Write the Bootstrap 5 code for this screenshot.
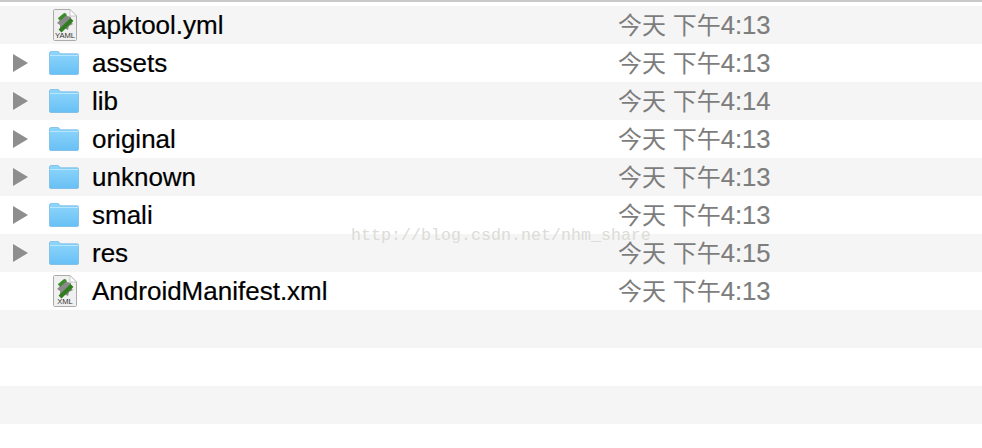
<!DOCTYPE html>
<html lang="en">
<head>
  <meta charset="UTF-8">
  <title>Finder list</title>
  <link href="https://cdn.jsdelivr.net/npm/bootstrap@5.3.0/dist/css/bootstrap.min.css" rel="stylesheet">
  <style>
    html, body {
      height: 448px;
      overflow: hidden;
      background: #fff;
    }

    .top-rule {
      height: 2px;
      background: #c9c9c9;
      margin-bottom: 4px;
    }

    .file-list {
      position: relative;
    }

    .file-row {
      height: 38px;
      font-family: "Liberation Sans", Arial, sans-serif;
      font-size: 26px;
      color: #000;
    }

    .file-row:nth-child(odd) {
      background: #f5f5f5;
    }

    .arrow-cell {
      width: 49px;
      padding-left: 13px;
    }

    .icon-cell {
      width: 43px;
    }

    .name-cell {
      width: 526px;
      padding-top: 1px;
      -webkit-text-stroke: 0.2px #000;
    }

    .date-cell {
      font-family: "Liberation Sans", "Noto Sans CJK SC", sans-serif;
      color: #7d7d7d;
      font-size: 24px;
      padding-top: 1px;
      white-space: pre;
    }

    .date-time {
      font-size: 25.6px;
      -webkit-text-stroke: 0.2px #7d7d7d;
    }

    .doc-label {
      font-family: "Liberation Sans", Arial, sans-serif;
      font-size: 7.6px;
      font-weight: 400;
      fill: #333;
    }

    .watermark {
      position: absolute;
      left: 351px;
      top: 220px;
      font-family: "Liberation Mono", monospace;
      font-size: 16.67px;
      line-height: 20px;
      color: #dcdcd8;
    }
  </style>
</head>
<body>
  <svg width="0" height="0" class="position-absolute">
    <defs>
      <linearGradient id="folderFill" x1="0" y1="0" x2="0" y2="1">
        <stop offset="0" stop-color="#8ed6fc"/>
        <stop offset="1" stop-color="#68c0f5"/>
      </linearGradient>
      <symbol id="folder" viewBox="0 0 30 24">
        <path d="M.5 4V2C.5 1.100 1.200.5 2 .5h6.500c1 0 1.500.4 2 1.200l.7 1.100H28c1 0 1.500.6 1.500 1.500V22c0 1-.6 1.500-1.500 1.500H2C1 23.500.5 23 .5 22z" fill="url(#folderFill)" stroke="#6fb5e2" stroke-width=".7"/>
        <path d="M.8 4.500h28.400" stroke="#b8e6fd" stroke-width="1"/>
      </symbol>
      <symbol id="arrow" viewBox="0 0 15 18">
        <path d="M0 0L15 9L0 18z" fill="#8e8e8e"/>
      </symbol>
      <symbol id="doc" viewBox="0 0 24 32">
        <path d="M.5 1.500C.5 1 1 .5 1.500.5H17L23.500 7V30.500c0 .5-.5 1-1 1H1.500c-.5 0-1-.5-1-1z" fill="#f0f0f0" stroke="#ababab"/>
        <path d="M17 .5V7H23.500z" fill="#fff" stroke="#b5b5b5" stroke-width=".7"/>
        <path d="M8 7L13 4L14 7L18 8L17 12L20 15L16 17L15 21L11 19L7 21L7 16L4 14L7 11z" fill="#8a8a8a"/>
        <path d="M7 22L19 10.500" stroke="#2f7d1e" stroke-width="4.200" fill="none"/>
        <path d="M6 10.500L12.500 5" stroke="#3a8c28" stroke-width="3.600" fill="none"/>
      </symbol>
    </defs>
  </svg>

  <div class="top-rule"></div>

  <div class="file-list">
    <div class="file-row d-flex align-items-center">
      <div class="arrow-cell"></div>
      <div class="icon-cell d-flex">
        <svg class="ms-1" width="24" height="32"><use href="#doc"/><text class="doc-label" x="12" y="29" text-anchor="middle">YAML</text></svg>
      </div>
      <div class="name-cell">apktool.yml</div>
      <div class="date-cell">今天 下午<span class="date-time">4:13</span></div>
    </div>
    <div class="file-row d-flex align-items-center">
      <div class="arrow-cell d-flex"><svg width="15" height="18"><use href="#arrow"/></svg></div>
      <div class="icon-cell d-flex"><svg width="30" height="24"><use href="#folder"/></svg></div>
      <div class="name-cell">assets</div>
      <div class="date-cell">今天 下午<span class="date-time">4:13</span></div>
    </div>
    <div class="file-row d-flex align-items-center">
      <div class="arrow-cell d-flex"><svg width="15" height="18"><use href="#arrow"/></svg></div>
      <div class="icon-cell d-flex"><svg width="30" height="24"><use href="#folder"/></svg></div>
      <div class="name-cell">lib</div>
      <div class="date-cell">今天 下午<span class="date-time">4:14</span></div>
    </div>
    <div class="file-row d-flex align-items-center">
      <div class="arrow-cell d-flex"><svg width="15" height="18"><use href="#arrow"/></svg></div>
      <div class="icon-cell d-flex"><svg width="30" height="24"><use href="#folder"/></svg></div>
      <div class="name-cell">original</div>
      <div class="date-cell">今天 下午<span class="date-time">4:13</span></div>
    </div>
    <div class="file-row d-flex align-items-center">
      <div class="arrow-cell d-flex"><svg width="15" height="18"><use href="#arrow"/></svg></div>
      <div class="icon-cell d-flex"><svg width="30" height="24"><use href="#folder"/></svg></div>
      <div class="name-cell">unknown</div>
      <div class="date-cell">今天 下午<span class="date-time">4:13</span></div>
    </div>
    <div class="file-row d-flex align-items-center">
      <div class="arrow-cell d-flex"><svg width="15" height="18"><use href="#arrow"/></svg></div>
      <div class="icon-cell d-flex"><svg width="30" height="24"><use href="#folder"/></svg></div>
      <div class="name-cell">smali</div>
      <div class="date-cell">今天 下午<span class="date-time">4:13</span></div>
    </div>
    <div class="file-row d-flex align-items-center">
      <div class="arrow-cell d-flex"><svg width="15" height="18"><use href="#arrow"/></svg></div>
      <div class="icon-cell d-flex"><svg width="30" height="24"><use href="#folder"/></svg></div>
      <div class="name-cell">res</div>
      <div class="date-cell">今天 下午<span class="date-time">4:15</span></div>
    </div>
    <div class="file-row d-flex align-items-center">
      <div class="arrow-cell"></div>
      <div class="icon-cell d-flex">
        <svg class="ms-1" width="24" height="32"><use href="#doc"/><text class="doc-label" x="12" y="29" text-anchor="middle">XML</text></svg>
      </div>
      <div class="name-cell">AndroidManifest.xml</div>
      <div class="date-cell">今天 下午<span class="date-time">4:13</span></div>
    </div>
    <div class="file-row"></div>
    <div class="file-row"></div>
    <div class="file-row"></div>
    <div class="watermark">http://blog.csdn.net/nhm_share</div>
  </div>
  <script src="https://cdn.jsdelivr.net/npm/bootstrap@5.3.0/dist/js/bootstrap.bundle.min.js"></script>
</body>
</html>
